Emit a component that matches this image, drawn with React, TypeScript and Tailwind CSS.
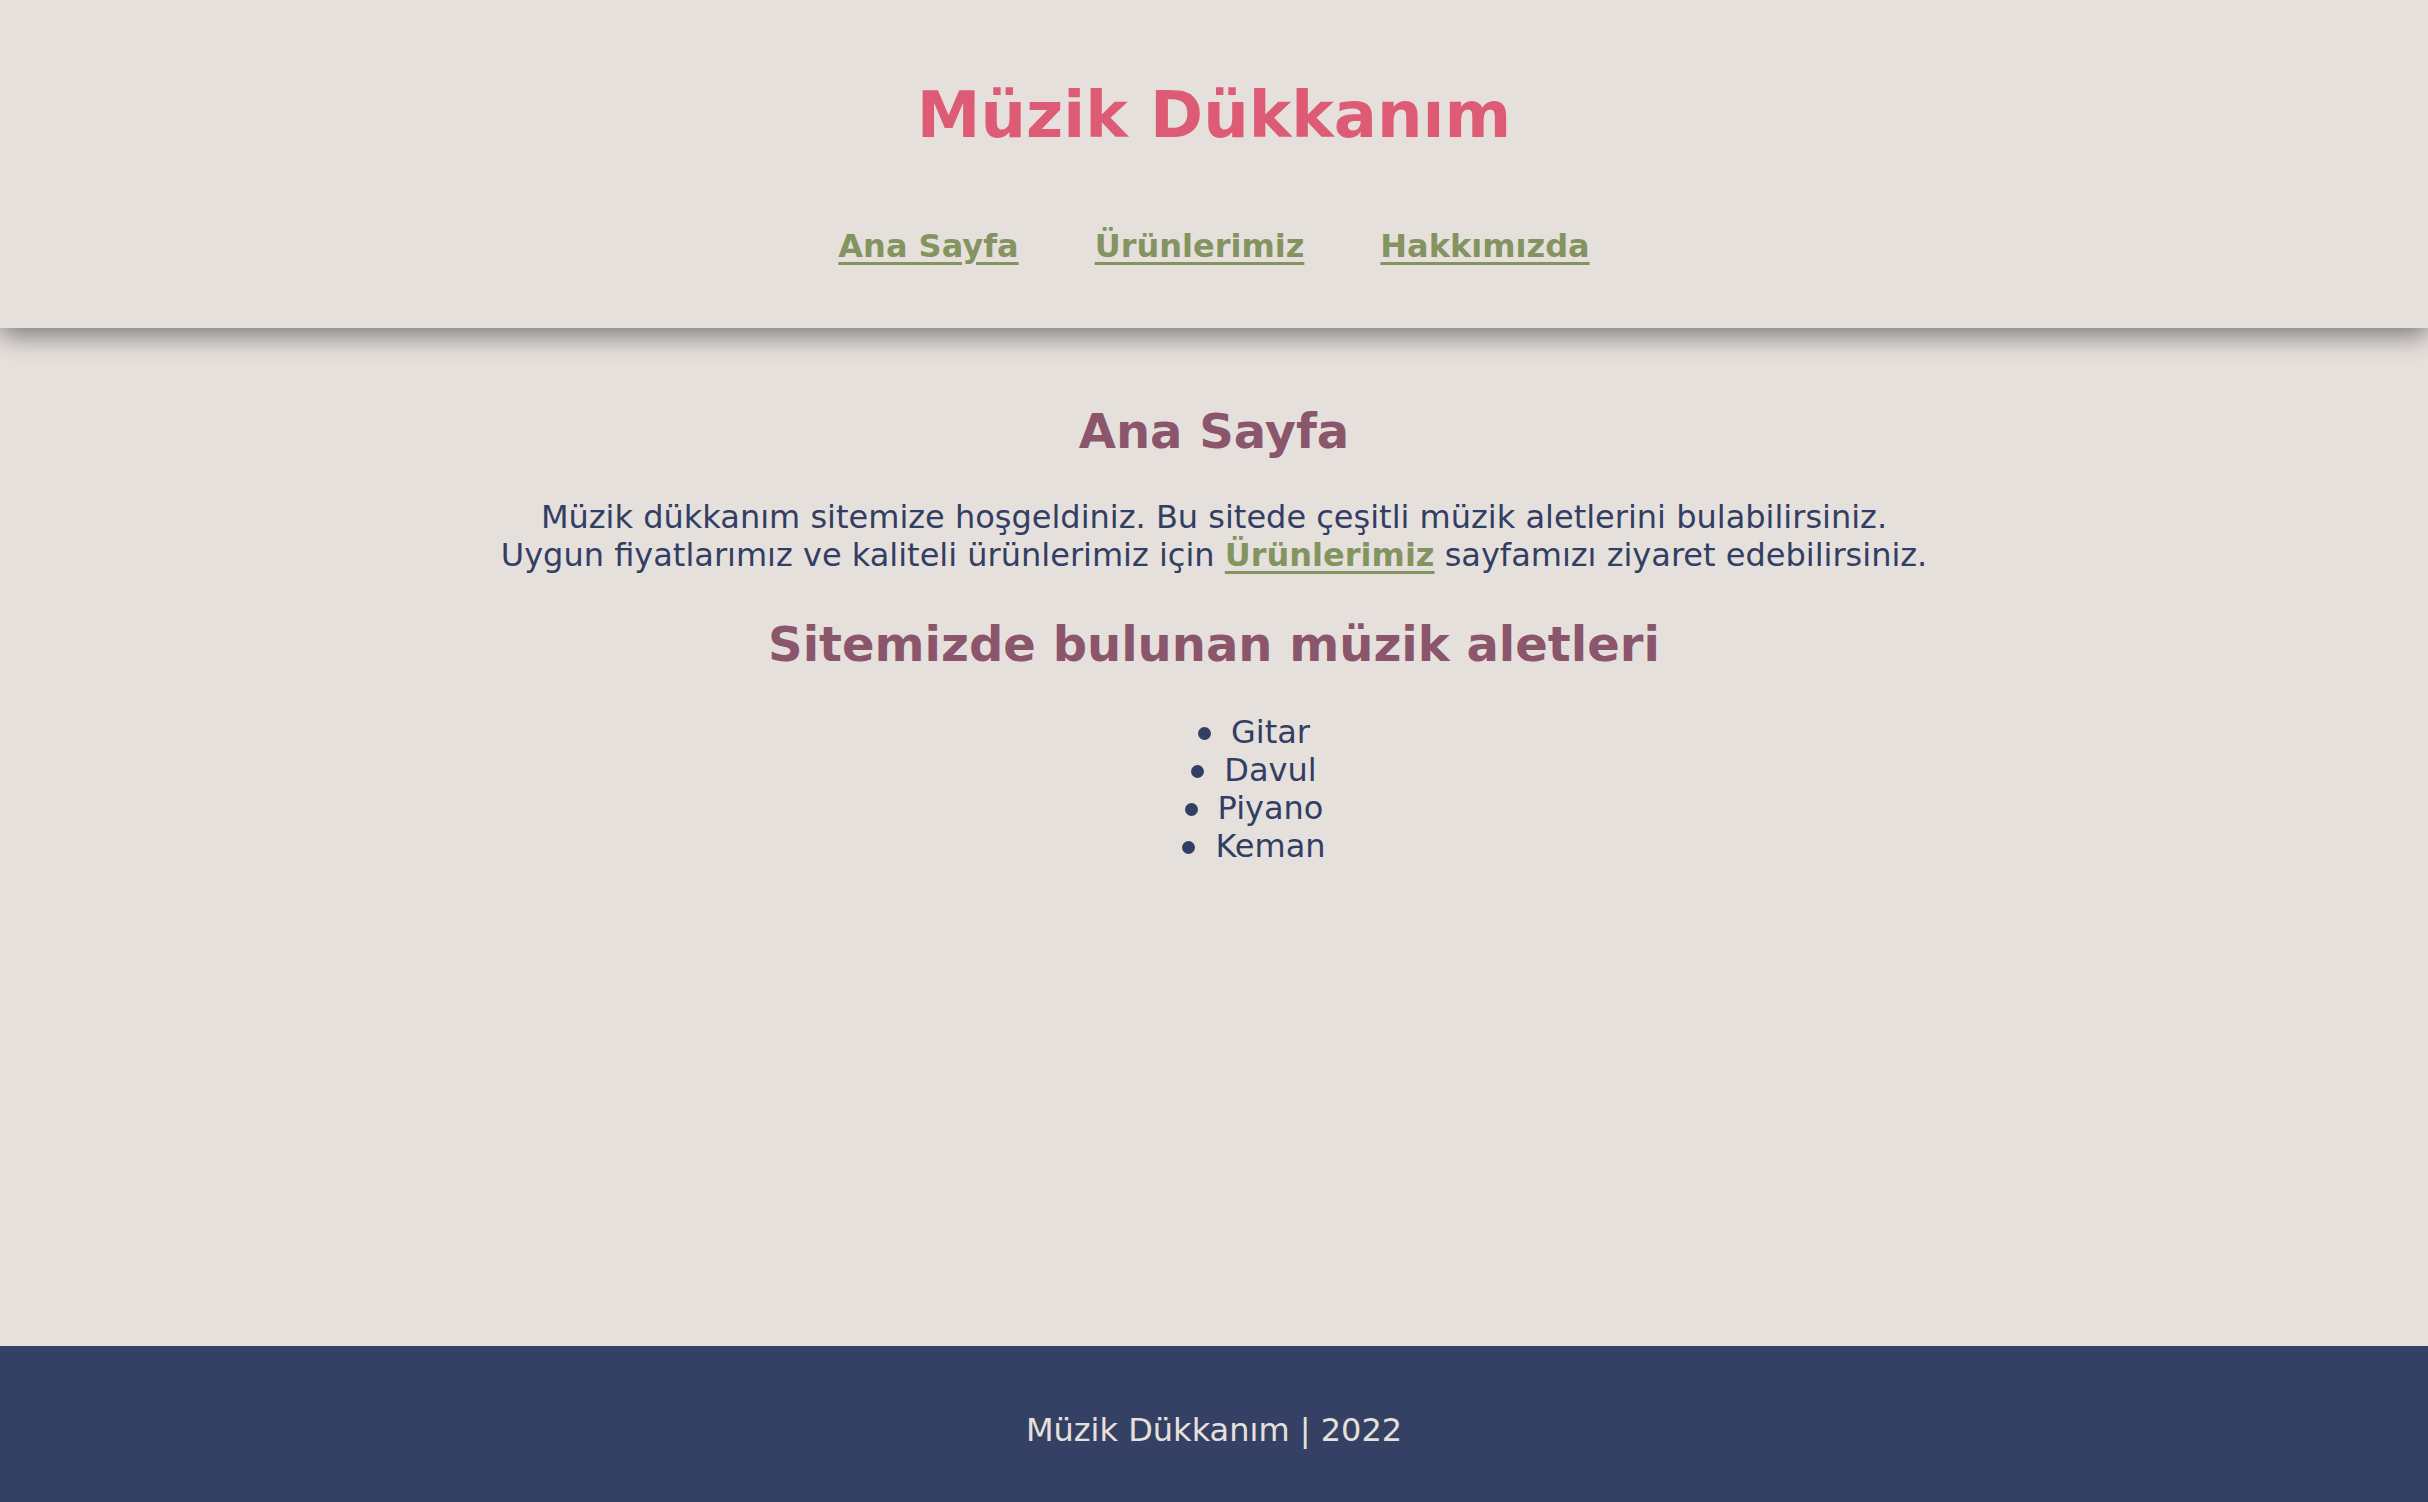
import React from "react";

export default function App() {
  const font = { fontFamily: '"DejaVu Sans", Verdana, sans-serif' };
  const items = ["Gitar", "Davul", "Piyano", "Keman"];
  return (
    <div
      className="min-h-screen flex flex-col bg-[#e6e0dc] text-[#323e63] text-center"
      style={font}
    >
      <header className="relative z-10 bg-[#e6e0dc] h-[328px] pt-[76px] shadow-[0_8px_24px_rgba(0,0,0,0.45)]">
        <h1 className="text-[64px] leading-[78px] font-bold text-[#de5b75]">
          Müzik Dükkanım
        </h1>
        <nav className="mt-[73px] flex justify-center gap-[76px] text-[32px] leading-[39px] font-bold">
          <a href="#" className="text-[#849460] underline decoration-[3px] underline-offset-[5px]">
            Ana Sayfa
          </a>
          <a href="#" className="text-[#849460] underline decoration-[3px] underline-offset-[5px]">
            Ürünlerimiz
          </a>
          <a href="#" className="text-[#849460] underline decoration-[3px] underline-offset-[5px]">
            Hakkımızda
          </a>
        </nav>
      </header>
      <main className="flex-1 pt-[74px]">
        <h2 className="text-[48px] leading-[58px] font-bold text-[#8b566c]">
          Ana Sayfa
        </h2>
        <p className="mt-[38px] text-[32px] leading-[38px]">
          Müzik dükkanım sitemize hoşgeldiniz. Bu sitede çeşitli müzik aletlerini bulabilirsiniz.
          <br />
          Uygun fiyatlarımız ve kaliteli ürünlerimiz için{" "}
          <a href="#" className="font-bold text-[#849460] underline decoration-[3px] underline-offset-[5px]">
            Ürünlerimiz
          </a>{" "}
          sayfamızı ziyaret edebilirsiniz.
        </p>
        <h2 className="mt-[41px] text-[48px] leading-[58px] font-bold text-[#8b566c]">
          Sitemizde bulunan müzik aletleri
        </h2>
        <ul className="mt-[40px] pl-20 text-[32px] leading-[38px]">
          {items.map((it) => (
            <li key={it} className="flex justify-center items-center">
              <span className="inline-block w-[13px] h-[13px] rounded-full bg-[#323e63] mr-[20px] mt-[2px]" />
              <span>{it}</span>
            </li>
          ))}
        </ul>
      </main>
      <footer className="h-[156px] bg-[#344164] text-[#e6e0dc] text-[32px] leading-[39px] flex items-center justify-center pt-[12px]">
        Müzik Dükkanım | 2022
      </footer>
    </div>
  );
}
